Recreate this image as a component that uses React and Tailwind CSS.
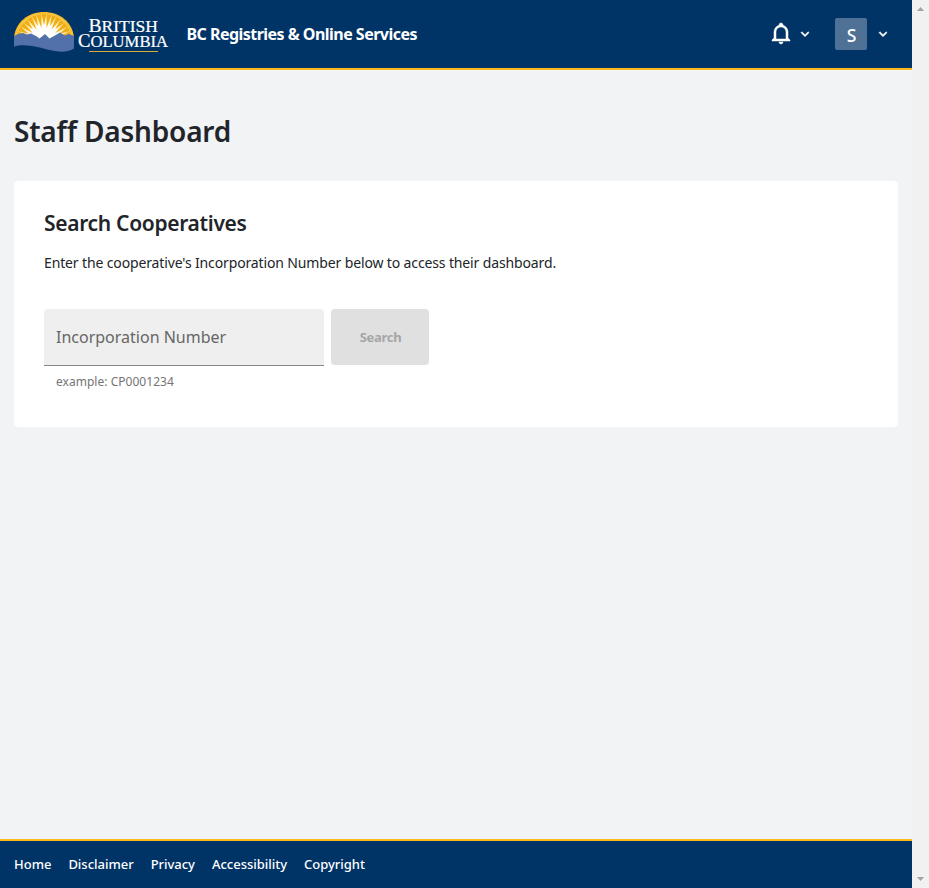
import React from "react";

const rays = Array.from({ length: 17 }, (_, i) => {
  const mid = Math.PI * (1.04 + (i * 0.92) / 16);
  const point = (radius, angle) =>
    `${(30 + radius * Math.cos(angle)).toFixed(2)},${(30 + radius * Math.sin(angle)).toFixed(2)}`;
  const inner = i % 2 ? 14 : 17;
  return [point(inner, mid), point(28, mid - 0.085), point(28, mid + 0.085)].join(" ");
});

function Logo() {
  return (
    <svg width="155" height="42" viewBox="0 0 155 42" className="block shrink-0" aria-label="British Columbia">
      <defs>
        <radialGradient id="glow" gradientUnits="userSpaceOnUse" cx="30" cy="29" r="30">
          <stop offset="0.5" stopColor="#fff" />
          <stop offset="0.72" stopColor="#ffeeb0" />
          <stop offset="1" stopColor="#f6c640" />
        </radialGradient>
      </defs>
      <path d="M0 25C2 10 14 0 30 0S58 10 60 25V30H0Z" fill="#f6bd2c" />
      <path d="M1.5 26C4 12 14 1.800 30 1.800S56 12 58.500 26V30H1.500Z" fill="url(#glow)" />
      {rays.map((points) => (
        <polygon key={points} points={points} fill="#efae16" />
      ))}
      <path d="M0 24L4 22L9 21L13 22.500L17 21.500L22 24L25.500 26.500L31 22L35.500 26.500L41 23.500L46 20.500L51 23.500L55 22L60 24V36.500C54 40 46 40.500 38 38.500C24 35 11 31 0 34.500Z" fill="#5270aa" />
      <g fill="#fff" stroke="#fff" strokeWidth="0.2" fontFamily="'Liberation Serif', 'Times New Roman', serif">
        <text x="74.500" y="20" fontSize="18" textLength="69.500" lengthAdjust="spacingAndGlyphs">
          B<tspan fontSize="16">RITISH</tspan>
        </text>
        <text x="64" y="35" fontSize="18" textLength="90" lengthAdjust="spacingAndGlyphs">
          C<tspan fontSize="16">OLUMBIA</tspan>
        </text>
      </g>
      <rect x="75" y="39" width="69" height="1" fill="#d8af35" />
    </svg>
  );
}

function Chevron() {
  return (
    <svg width="16" height="16" viewBox="0 0 24 24" fill="currentColor" stroke="currentColor" strokeWidth="0.8">
      <path d="M7.41,8.58L12,13.17L16.59,8.58L18,10L12,16L6,10L7.41,8.58Z" />
    </svg>
  );
}

function Header() {
  return (
    <header className="flex h-[70px] shrink-0 items-center border-b-2 border-[#fcba19] bg-[#003366] pl-3.5 pr-[21px] text-white">
      <div className="-mt-[2px]">
        <Logo />
      </div>
      <span className="ml-[17.500px] whitespace-nowrap text-base font-bold tracking-[-0.53px]">
        BC Registries &amp; Online Services
      </span>
      <div className="ml-auto flex items-center">
        <button className="flex items-center gap-1" aria-label="Notifications">
          <svg width="24" height="24" viewBox="0 0 24 24" fill="currentColor" stroke="currentColor" strokeWidth="0.5" className="-mt-[2px]">
            <path d="M10 21H14C14 22.1 13.1 23 12 23S10 22.1 10 21M21 19V20H3V19L5 17V11C5 7.9 7 5.2 10 4.3V4C10 2.9 10.9 2 12 2S14 2.9 14 4V4.3C17 5.2 19 7.9 19 11V17L21 19M17 11C17 8.2 14.8 6 12 6S7 8.2 7 11V18H17V11Z" />
          </svg>
          <Chevron />
        </button>
        <button className="ml-[22px] flex items-center gap-2" aria-label="Account">
          <span className="flex size-8 items-center justify-center rounded-[2px] bg-[#4f7196] pl-px pt-0.5 text-[17.500px] font-medium">
            S
          </span>
          <Chevron />
        </button>
      </div>
    </header>
  );
}

function SearchCard() {
  return (
    <section className="mt-[30px] h-[246px] rounded bg-white px-[30px] pt-[27px]">
      <h2 className="text-[21px] font-semibold leading-[30px] tracking-[-0.31px]">Search Cooperatives</h2>
      <p className="mt-[14px] text-sm leading-[21px] tracking-[-0.134px]">
        Enter the cooperative&#39;s Incorporation Number below to access their dashboard.
      </p>
      <div className="mt-9 flex gap-[7px]">
        <div className="w-[280px]">
          <div className="flex h-[57px] items-center rounded-t border-b border-[#868686] bg-[#efefef] px-3 text-base text-[#666666]">
            Incorporation Number
          </div>
          <div className="mt-[7px] px-3 text-xs leading-[18px] tracking-[0.03px] text-[#757575]">example: CP0001234</div>
        </div>
        <button className="h-14 w-[98px] rounded bg-[#e0e0e0] pl-px pt-0.5 text-[13px] font-bold tracking-[-0.3px] text-[#a6a6a6]">Search</button>
      </div>
    </section>
  );
}

export default function App() {
  return (
    <div className="flex h-[888px] w-[929px] overflow-hidden bg-[#f1f3f5] font-['Noto_Sans',sans-serif] text-[#212529]">
      <div className="flex w-[912px] flex-col">
        <Header />
        <main className="flex-1 px-3.5 pt-[41px]">
          <h1 className="text-[28px] font-semibold leading-10 tracking-[-0.2px]">Staff Dashboard</h1>
          <SearchCard />
        </main>
        <footer className="flex h-[49px] items-center gap-[17px] border-t-2 border-[#fcba19] bg-[#003366] px-3.5 text-[13px] font-medium tracking-[-0.02px] text-white">
          <a>Home</a>
          <a>Disclaimer</a>
          <a>Privacy</a>
          <a>Accessibility</a>
          <a>Copyright</a>
        </footer>
      </div>
      <div className="flex w-[17px] flex-col items-center justify-between bg-[#f1f1f1] py-[7px] text-[#a3a3a3]">
        <svg width="7" height="4" viewBox="0 0 7 4" fill="currentColor">
          <path d="M0 4L3.500 0L7 4Z" />
        </svg>
        <svg width="7" height="4" viewBox="0 0 7 4" fill="currentColor">
          <path d="M0 0L3.500 4L7 0Z" />
        </svg>
      </div>
    </div>
  );
}
